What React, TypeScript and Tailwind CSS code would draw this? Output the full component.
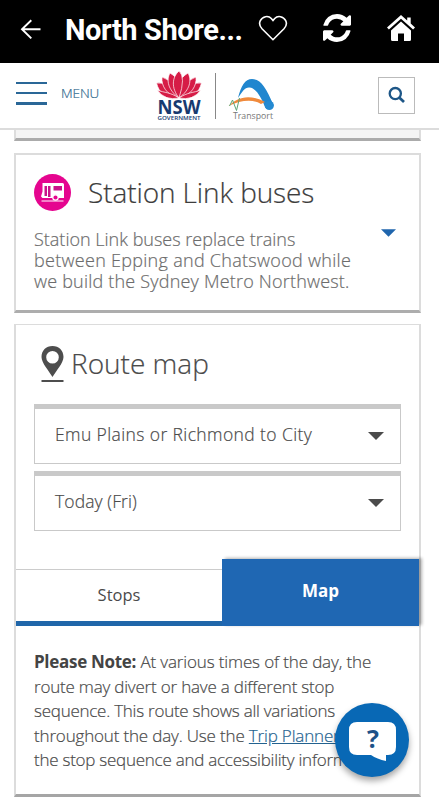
import React from "react";

const intro = [
  { text: "Station Link buses replace trains", className: "tracking-[0px]" },
  { text: "between Epping and Chatswood while", className: "tracking-[0.29px]" },
  { text: "we build the Sydney Metro Northwest.", className: "tracking-[0.2px]" },
];

export default function App() {
  return (
    <div className="relative flex h-[800px] w-[439px] flex-col overflow-hidden bg-white font-['Open_Sans','Noto_Sans',sans-serif] text-[#4a4a4a]">
      <TopBar />
      <SiteHeader />
      <main className="flex flex-col px-[14px] pr-[18px]">
        <div className="h-[11px] border-x-2 border-b-3 border-[#ddd] border-b-[#ababab] bg-[#f4f4f4]" />
        <StationLinkCard />
        <RouteMapCard />
      </main>
      <HelpButton />
    </div>
  );
}

function TopBar() {
  return (
    <div className="flex h-[63px] shrink-0 items-center bg-black text-white">
      <svg className="ml-5 h-6 w-6 mt-[-6px]" viewBox="0 0 24 24" fill="none" stroke="currentColor" strokeWidth="1.9">
        <path d="M20.500 12.300H2M11.300 3.200 2 12.300l9.300 9.100" />
      </svg>
      <h1 className="ml-[21px] mt-[-3px] w-[188px] whitespace-nowrap font-[Roboto,sans-serif] text-[29px] font-bold leading-none tracking-[-0.4px]">
        North Shore...
      </h1>
      <svg className="ml-[5px] mt-[-7px] h-7 w-[30px]" viewBox="0 0 30 28" fill="none" stroke="currentColor" strokeWidth="1.6">
        <path d="M15 25.700 4 14.800C1.500 12.200 1 9.400 2.300 6.600 4.600 2.200 10.300 1.200 13.300 4.500L15 6.500l1.700-2C19.700 1.200 25.400 2.200 27.700 6.600 29 9.400 28.500 12.200 26 14.800Z" />
      </svg>
      <svg className="ml-[35px] mt-[-7px] h-7 w-[28px]" viewBox="0 0 1536 1536" fill="currentColor">
        <path d="M1511 928q0 5-1 7-64 268-268 434.500T764 1536q-146 0-282.500-55T238 1324l-129 129q-19 19-45 19t-45-19-19-45V960q0-26 19-45t45-19h448q26 0 45 19t19 45-19 45l-137 137q71 66 161 102t187 36q134 0 250-65t186-179q11-17 53-117 8-23 30-23h192q13 0 22.500 9.500t9.500 22.500zm25-800v448q0 26-19 45t-45 19h-448q-26 0-45-19t-19-45 19-45l138-138Q969 256 768 256q-134 0-250 65T332 500q-11 17-53 117-8 23-30 23H50q-13 0-22.500-9.500T18 608v-7q65-268 270-434.500T768 0q146 0 284 55.500T1297 212l130-129q19-19 45-19t45 19 19 45z" />
      </svg>
      <svg className="ml-[36px] mt-[-7px] h-7 w-7" viewBox="0 0 28 28" fill="currentColor">
        <path d="M14 7.400 24 16.400V25.500q0 1.500-1.500 1.500H17v-7.500h-6V27H5.500Q4 27 4 25.500V16.400ZM14 1 0 13.500l1.900 2L14 4.700l12.100 10.800 1.900-2-4.300-3.900V3.500h-3.500v3Z" />
      </svg>
    </div>
  );
}

function SiteHeader() {
  return (
    <header className="flex h-[67px] shrink-0 items-center border-b-2 border-[#dcdcdc]">
      <div className="ml-4 mt-[-5px] flex h-[23px] w-[31px] flex-col justify-between">
        <span className="h-[2.500px] bg-[#2a6797]" />
        <span className="h-[2.500px] bg-[#2a6797]" />
        <span className="h-[2.500px] bg-[#2a6797]" />
      </div>
      <span className="ml-[14px] mt-[-4px] w-[94px] text-[13.500px] font-light tracking-[-0.1px] text-[#336b8f] [-webkit-text-stroke:0.2px]">
        MENU
      </span>
      <NswLogo />
      <div className="ml-[12px] h-[46px] w-px bg-[#888]" />
      <TransportLogo />
      <button className="ml-[101px] mt-[-1px] flex h-[37px] w-[37px] items-center justify-center border border-[#bbb]">
        <svg className="h-[18px] w-[18px]" viewBox="0 0 18 18" fill="none" stroke="#1d5687">
          <circle cx="7.300" cy="7.600" r="5.600" strokeWidth="2.300" />
          <path d="m11.500 11.800 4.500 4.200" strokeWidth="2.700" />
        </svg>
      </button>
    </header>
  );
}

function NswLogo() {
  return (
    <svg className="h-[56px] w-12" viewBox="0 0 48 56">
      <g fill="#d61c46" stroke="#fff" strokeWidth="0.7">
        <path d="M22 30C11 31 4 25 1.500 15q6-1 10 3 6 3 10.500 12Z" />
        <path d="M26 30c11 1 18-5 20.500-15q-6-1-10 3-6 3-10.500 12Z" />
        <path d="M23 30C12 27 6 18 7 9q7 2 10 8 5 5 6 13Z" />
        <path d="M25 30c11-3 17-12 16-21q-7 2-10 8-5 5-6 13Z" />
        <path d="M24 30C13 22 11 12 15 5q7 4 9 11Z" />
        <path d="M24 30c11-8 13-18 9-25q-7 4-9 11Z" />
        <path d="M24 30C16 20 17 9 24 3q7 6 0 27Z" />
        <path d="M24 30C15 24 10 25 2 22q8 11 22 8Z" />
        <path d="M24 30c9-6 14-5 22-8q-8 11-22 8Z" />
      </g>
      <text x="24" y="45.500" textAnchor="middle" textLength="43" lengthAdjust="spacingAndGlyphs" fontFamily="Open Sans" fontWeight="700" fontSize="20" fill="#173a70">
        NSW
      </text>
      <text x="24" y="52" textAnchor="middle" textLength="43" lengthAdjust="spacingAndGlyphs" fontFamily="Open Sans" fontWeight="600" fontSize="5.600" fill="#173a70">
        GOVERNMENT
      </text>
    </svg>
  );
}

function TransportLogo() {
  return (
    <svg className="ml-[11px] h-[50px] w-[50px]" viewBox="0 0 50 50">
      <path d="M11 27C14 15 18 8 25 8c9 0 14 9 21.500 26l-8 3C34 26 29 17 22.500 16.500 18 16 15 21 11 27Z" fill="#2086cf" />
      <path d="M1.500 35C10 27 21 22 38 31l-4 2C26 28 14 29 1.500 35Z" fill="#f08a3c" />
      <path d="m2.500 35 3-6 4 10.500L12.500 27" fill="none" stroke="#5ba676" strokeWidth="1" />
      <circle cx="42.300" cy="34.500" r="4.600" fill="#248ad2" />
      <text x="6" y="48" textLength="40" lengthAdjust="spacingAndGlyphs" fontFamily="Open Sans" fontSize="9.500" fill="#777">
        Transport
      </text>
    </svg>
  );
}

function Caret({ className }: { className: string }) {
  return (
    <svg className={className} viewBox="0 0 16 8" fill="currentColor">
      <path d="M0 0h16L8 8Z" />
    </svg>
  );
}

function StationLinkCard() {
  return (
    <section className="mt-[12px] h-[160px] border-2 border-b-3 border-[#dcdcdc] border-b-[#adadad] pl-[18px]">
      <div className="flex h-[74px] items-center">
        <svg className="h-[37px] w-[37px]" viewBox="0 0 37 37">
          <circle cx="18.500" cy="18.500" r="18.500" fill="#e5058f" />
          <path d="M8.500 9h20q1.500 0 1.500 1.500V24H8.500L7 22.500l1.500-5Z" fill="#fff" />
          <path d="M10.500 12h2.500v10h-2.500zM14 12h2.500v11H14zM19.500 12h8.500v4.500h-8.500z" fill="#c9138a" />
          <circle cx="21.500" cy="23.500" r="2.700" fill="#e5058f" stroke="#fff" strokeWidth="1.200" />
          <path d="M7.500 27h22" stroke="#fff" />
        </svg>
        <h2 className="ml-[17px] whitespace-nowrap text-[28px] font-light leading-none tracking-[-0.1px] text-[#3d3d3d] [-webkit-text-stroke:0.2px]">
          Station Link buses
        </h2>
      </div>
      <div className="flex">
        <div className="w-[347px] text-[18px] font-light leading-[21px] text-[#6c6c6c] [-webkit-text-stroke:0.2px]">
          {intro.map((line) => (
            <div key={line.text} className={`whitespace-nowrap ${line.className}`}>
              {line.text}
            </div>
          ))}
        </div>
        <Caret className="h-2 w-[15px] text-[#1f65ad]" />
      </div>
    </section>
  );
}

function Select({ label, className }: { label: string; className: string }) {
  return (
    <div className="flex h-[60px] items-center justify-between border border-t-[5px] border-[#c9c9c9] pb-[3px] pl-[20px] pr-4">
      <span className={`whitespace-nowrap text-[17.500px] font-light [-webkit-text-stroke:0.2px] ${className}`}>{label}</span>
      <Caret className="mt-[2px] h-2 w-4 text-[#4b4b4b]" />
    </div>
  );
}

function RouteMapCard() {
  return (
    <section className="mt-[11px] h-[473px] border-2 border-t border-b-3 border-[#dcdcdc] border-b-[#a5a5a5]">
      <div className="flex h-[79px] items-center pl-[25px]">
        <svg className="h-[37px] w-6" viewBox="0 0 24 37">
          <path fillRule="evenodd" d="M11.500 0C18 0 22.500 4.500 22.500 11 22.500 17 15 25 11.500 31 8 25 .5 17 .5 11 .5 4.500 5 0 11.500 0Zm0 5a6.300 6.300 0 1 0 0 12.600 6.300 6.300 0 0 0 0-12.600Z" fill="#4d4d4d" />
          <path d="M.5 35h22" stroke="#4d4d4d" strokeWidth="2" />
        </svg>
        <h2 className="ml-[6px] mt-[-4px] whitespace-nowrap text-[28px] font-light leading-none tracking-[0px] [-webkit-text-stroke:0.2px]">
          Route map
        </h2>
      </div>
      <div className="flex flex-col gap-[7px] pl-[18px] pr-[18px]">
        <Select label="Emu Plains or Richmond to City" className="tracking-[0.39px]" />
        <Select label="Today (Fri)" className="tracking-[0.1px]" />
      </div>
      <div className="mt-[28px] flex h-[67px] items-end">
        <div className="flex h-[57px] w-[206px] items-center justify-center border-t border-b-[5px] border-t-[#ccc] border-b-[#2066a9] pb-[1px] text-[16.500px]">
          Stops
        </div>
        <div className="flex h-[67px] flex-1 items-center justify-center bg-[#1f67b3] pb-[4px] text-[17px] font-bold text-white shadow-[3px_-1px_3px_rgba(0,0,0,0.3)]">
          Map
        </div>
      </div>
      <div className="whitespace-nowrap pl-[18px] pt-[24px] text-[17px] font-light leading-[24.600px]">
        <div className="tracking-[-0.14px] [-webkit-text-stroke:0.2px]">
          <b className="font-bold tracking-[-0.3px] text-[#444] [-webkit-text-stroke:0px]">Please Note:</b> At various times of the day, the
        </div>
        <div className="tracking-[-0.2px] [-webkit-text-stroke:0.2px]">route may divert or have a different stop</div>
        <div className="tracking-[-0.25px] [-webkit-text-stroke:0.2px]">sequence. This route shows all variations</div>
        <div className="tracking-[-0.17px] [-webkit-text-stroke:0.2px]">
          throughout the day. Use the <a className="text-[#23628f] underline">Trip Planner</a>
        </div>
        <div className="tracking-[-0.25px] [-webkit-text-stroke:0.2px]">the stop sequence and accessibility inform</div>
      </div>
    </section>
  );
}

function HelpButton() {
  return (
    <button className="absolute left-[335px] top-[703px] flex h-[74px] w-[74px] items-center justify-center rounded-full bg-[#0868b5] shadow-[0_4px_6px_rgba(0,0,0,0.35)]">
      <svg className="mt-[3px] h-10 w-[47px]" viewBox="0 0 47 40">
        <path d="M8 0h31q8 0 8 8v17q0 8-8 8h-2v6q-9-2-15-6H8q-8 0-8-8V8q0-8 8-8Z" fill="#fff" />
        <text x="24" y="26" textAnchor="middle" fontFamily="Open Sans" fontWeight="700" fontSize="25" fill="#1d5288">
          ?
        </text>
      </svg>
    </button>
  );
}
